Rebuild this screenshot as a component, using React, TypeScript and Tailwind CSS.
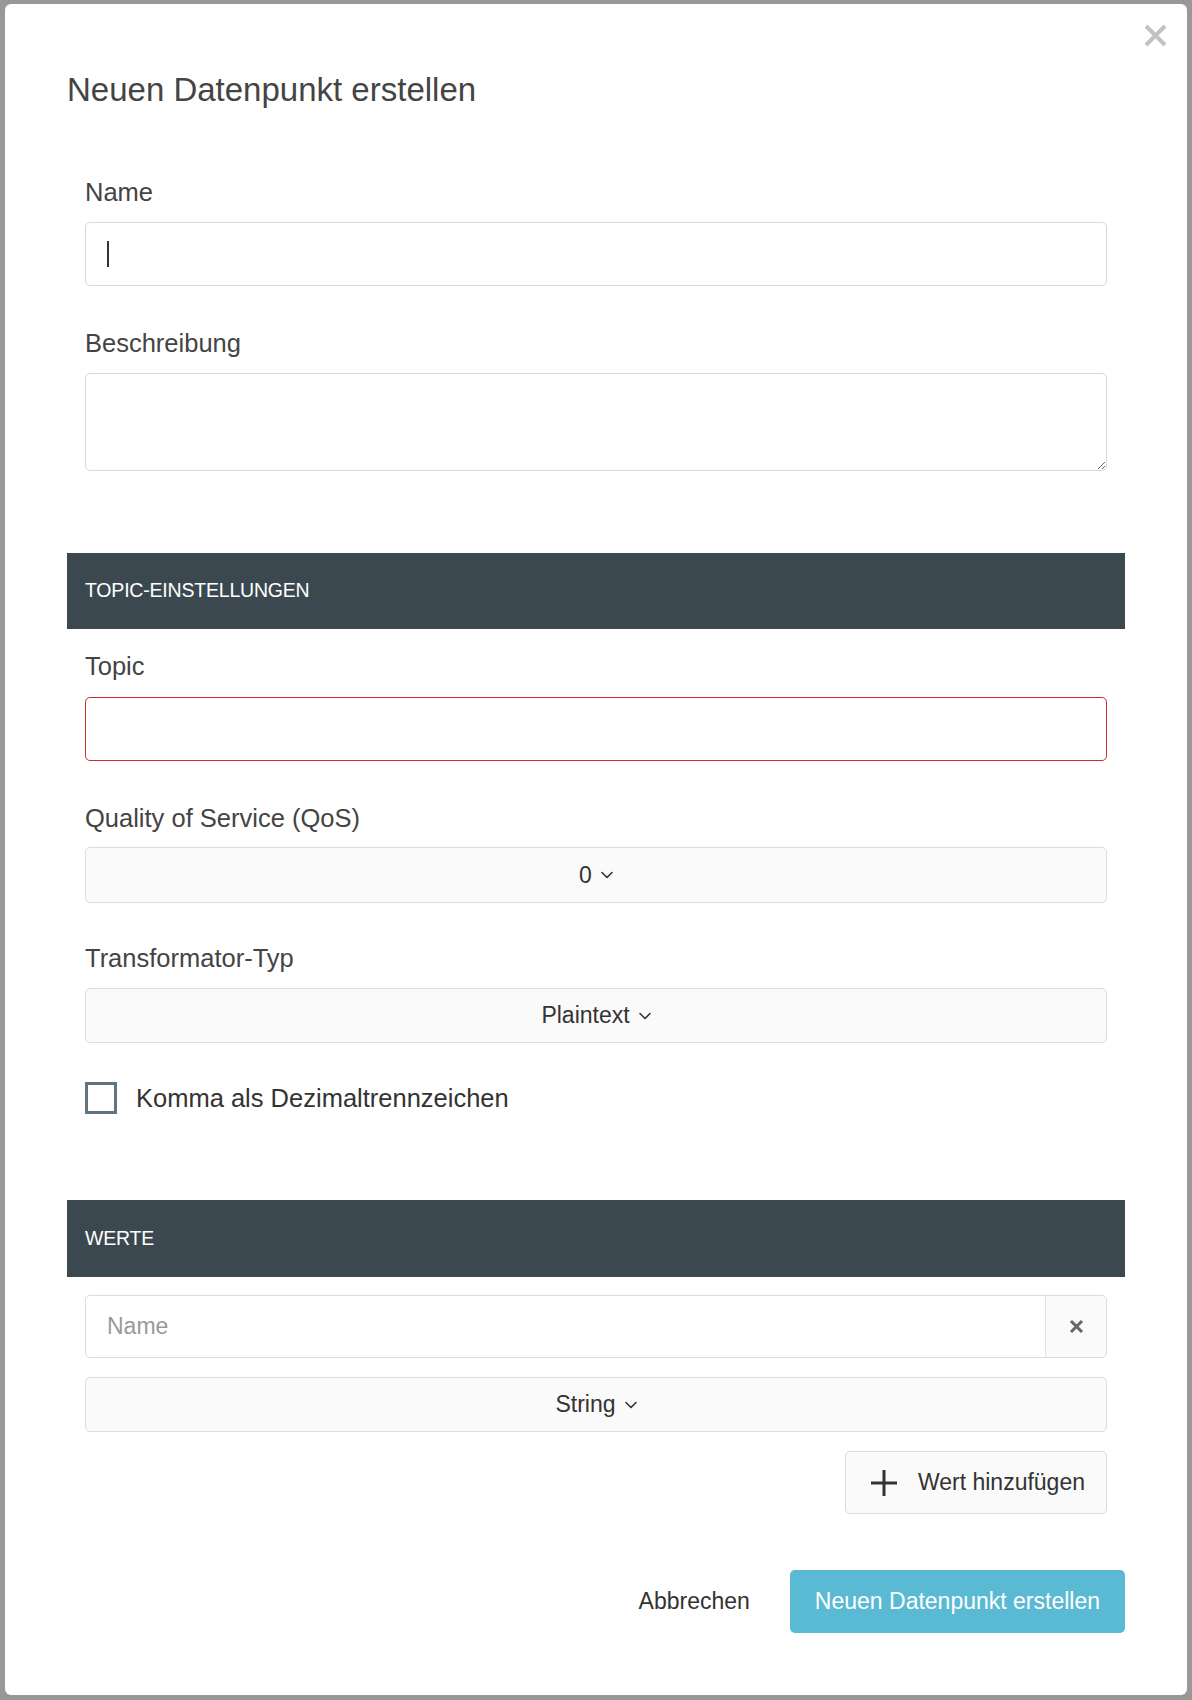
import React from "react";

const FONT = "font-['Liberation_Sans',Arial,Helvetica,sans-serif]";

const Chevron = () => (
  <svg width="12" height="8" viewBox="0 0 12 8" fill="none" className="ml-[9px]">
    <path d="M1 1.5 L6 6.5 L11 1.5" stroke="#333" strokeWidth="1.6" strokeLinecap="round" strokeLinejoin="round" />
  </svg>
);

const Label = ({ children, className = "" }: { children: React.ReactNode; className?: string }) => (
  <label className={`block text-[25.5px] leading-[30px] text-[#444] ${className}`}>{children}</label>
);

const SelectBox = ({ value, className = "" }: { value: string; className?: string }) => (
  <button
    type="button"
    className={`flex w-full h-[55px] items-center justify-center rounded-[5px] border border-[#dcdcdc] bg-[#fafafa] text-[23px] text-[#333] ${className}`}
  >
    <span>{value}</span>
    <Chevron />
  </button>
);

const SectionHeader = ({ title, className = "" }: { title: string; className?: string }) => (
  <div className={`flex h-[76px] items-center bg-[#3c4850] pl-[18px] text-[19.5px] tracking-[-0.2px] text-white ${className}`}>
    {title}
  </div>
);

const App = () => {
  return (
    <div className={`min-h-[1700px] bg-[#989898] px-[5px] pt-[4px] ${FONT}`}>
      <div className="relative h-[1691px] rounded-[6px] bg-white px-[62px] pt-[66px]">
        <button type="button" className="absolute right-[20px] top-[20px] h-[23px] w-[23px]">
          <svg width="23" height="23" viewBox="0 0 23 23">
            <path d="M2 2 L21 21 M21 2 L2 21" stroke="#c2c2c2" strokeWidth="4" />
          </svg>
        </button>

        <h2 className="text-[33px] leading-[40px] text-[#444]">Neuen Datenpunkt erstellen</h2>

        <div className="px-[18px]">
          <Label className="mt-[67px]">Name</Label>
          <div className="mt-[15px] flex h-[64px] items-center rounded-[5px] border border-[#d9d9d9] bg-white pl-[21px]">
            <span className="h-[26px] w-[2px] bg-[#333]" />
            <input className="h-full flex-1 bg-transparent text-[23px] outline-none" />
          </div>

          <Label className="mt-[42px]">Beschreibung</Label>
          <textarea className="mt-[15px] block h-[98px] w-full rounded-[5px] border border-[#d9d9d9] bg-white px-[21px] text-[23px] outline-none" />
        </div>

        <SectionHeader title="TOPIC-EINSTELLUNGEN" className="mt-[82px]" />

        <div className="px-[18px]">
          <Label className="mt-[22px]">Topic</Label>
          <input className="mt-[16px] block h-[64px] w-full rounded-[5px] border border-[#c9302c] bg-white px-[21px] text-[23px] outline-none" />

          <Label className="mt-[42px]">Quality of Service (QoS)</Label>
          <SelectBox value="0" className="mt-[14px] h-[56px]" />

          <Label className="mt-[40px]">Transformator-Typ</Label>
          <SelectBox value="Plaintext" className="mt-[15px]" />

          <div className="mt-[39px] flex items-center">
            <span className="h-[32px] w-[32px] border-[3px] border-[#607482] bg-white" />
            <span className="ml-[19px] text-[25.5px] leading-[30px] text-[#333]">Komma als Dezimaltrennzeichen</span>
          </div>
        </div>

        <SectionHeader title="WERTE" className="mt-[86px] h-[77px]" />

        <div className="px-[18px]">
          <div className="mt-[18px] flex h-[63px] rounded-[5px] border border-[#dcdcdc]">
            <input
              placeholder="Name"
              className="h-full flex-1 rounded-l-[5px] bg-white pl-[21px] text-[23px] text-[#333] outline-none placeholder:text-[#999]"
            />
            <button type="button" className="flex w-[61px] items-center justify-center rounded-r-[5px] border-l border-[#e3e3e3] bg-[#fafafa]">
              <svg width="15" height="15" viewBox="0 0 15 15">
                <path d="M2 2 L13 13 M13 2 L2 13" stroke="#666" strokeWidth="3" />
              </svg>
            </button>
          </div>

          <SelectBox value="String" className="mt-[19px]" />

          <div className="mt-[19px] flex justify-end">
            <button
              type="button"
              className="flex h-[63px] items-center rounded-[5px] border border-[#dcdcdc] bg-[#fafafa] pl-[25px] pr-[21px] text-[23px] text-[#333]"
            >
              <svg width="26" height="26" viewBox="0 0 26 26">
                <path d="M13 0 V26 M0 13 H26" stroke="#333" strokeWidth="3" />
              </svg>
              <span className="ml-[21px]">Wert hinzufügen</span>
            </button>
          </div>
        </div>

        <div className="mt-[56px] flex items-center justify-end gap-[17px]">
          <button type="button" className="h-[63px] px-[23px] text-[23px] text-[#333]">
            Abbrechen
          </button>
          <button type="button" className="h-[63px] rounded-[5px] bg-[#5ab9d3] px-[25px] text-[23px] text-white">
            Neuen Datenpunkt erstellen
          </button>
        </div>
      </div>
    </div>
  );
};

export default App;
